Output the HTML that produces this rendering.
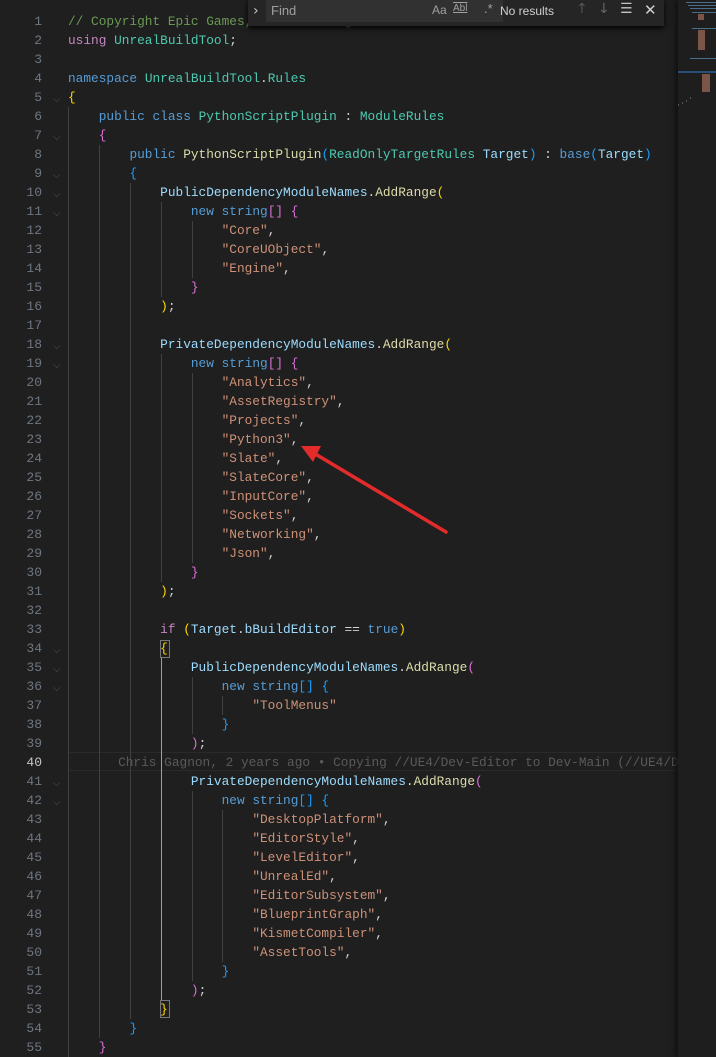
<!DOCTYPE html>
<html><head><meta charset="utf-8">
<style>
html,body{margin:0;padding:0;background:#1f1f1f;width:716px;height:1057px;overflow:hidden;}
#ed{position:absolute;left:0;top:0;width:678px;height:1057px;background:#1f1f1f;}
.ln{position:absolute;left:0;width:42px;text-align:right;font:13px "Liberation Mono",monospace;color:#6e7681;line-height:19px;top:12px;}
.ln div{height:19px}
pre{position:absolute;left:68px;top:12px;margin:0;font:12.8px/19px "Liberation Mono",monospace;color:#d4d4d4;}
.g{position:absolute;width:1px;background:#404040;}
.c{color:#6a9955}.k{color:#569cd6}.p{color:#c586c0}.t{color:#4ec9b0}.f{color:#dcdcaa}.s{color:#ce9178}.v{color:#9cdcfe}
.y{color:#ffd700}.o{color:#da70d6}.b{color:#179fff}
.bl{color:#5a5a5a;padding-left:4px}
#mm{position:absolute;left:678px;top:0;width:38px;height:1057px;background:#1e1e1e;box-shadow:-3px 0 5px #111;}
.fold{position:absolute;left:53px;color:#555;font:10px "DejaVu Sans",sans-serif;}
</style></head><body>
<div id="ed">
<div style="position:absolute;left:68px;top:752px;width:610px;height:17px;border-top:1px solid #2a2a2a;border-bottom:1px solid #2a2a2a;"></div>
<div class="g" style="left:68px;top:107px;height:950px"></div>
<div class="g" style="left:99px;top:145px;height:893px"></div>
<div class="g" style="left:130px;top:183px;height:836px"></div>
<div class="g" style="left:161px;top:202px;height:95px"></div>
<div class="g" style="left:161px;top:354px;height:228px"></div>
<div class="g" style="left:161px;top:658px;height:342px;background:#c9a800"></div>
<div class="g" style="left:192px;top:221px;height:57px"></div>
<div class="g" style="left:192px;top:373px;height:190px"></div>
<div class="g" style="left:192px;top:677px;height:57px"></div>
<div class="g" style="left:192px;top:791px;height:190px"></div>
<div class="g" style="left:222px;top:696px;height:19px"></div>
<div class="g" style="left:222px;top:810px;height:152px"></div>
<div style="position:absolute;left:160px;top:640px;width:8px;height:16px;border:1px solid #777"></div>
<div style="position:absolute;left:160px;top:1000px;width:8px;height:16px;border:1px solid #777"></div>
<div class="ln">
<div>1</div><div>2</div><div>3</div><div>4</div><div>5</div><div>6</div><div>7</div><div>8</div><div>9</div><div>10</div><div>11</div><div>12</div><div>13</div><div>14</div><div>15</div><div>16</div><div>17</div><div>18</div><div>19</div><div>20</div><div>21</div><div>22</div><div>23</div><div>24</div><div>25</div><div>26</div><div>27</div><div>28</div><div>29</div><div>30</div><div>31</div><div>32</div><div>33</div><div>34</div><div>35</div><div>36</div><div>37</div><div>38</div><div>39</div><div style="color:#c6c6c6">40</div><div>41</div><div>42</div><div>43</div><div>44</div><div>45</div><div>46</div><div>47</div><div>48</div><div>49</div><div>50</div><div>51</div><div>52</div><div>53</div><div>54</div><div>55</div>
</div>
<div class="fold" style="top:94px">⌵</div><div class="fold" style="top:132px">⌵</div><div class="fold" style="top:170px">⌵</div>
<div class="fold" style="top:189px">⌵</div><div class="fold" style="top:208px">⌵</div><div class="fold" style="top:341px">⌵</div><div class="fold" style="top:360px">⌵</div>
<div class="fold" style="top:645px">⌵</div><div class="fold" style="top:664px">⌵</div><div class="fold" style="top:683px">⌵</div><div class="fold" style="top:778px">⌵</div><div class="fold" style="top:797px">⌵</div>
<pre><span class="c">// Copyright Epic Games, Inc. All Rights Reserved.</span>
<span class="p">using</span> <span class="t">UnrealBuildTool</span>;

<span class="k">namespace</span> <span class="t">UnrealBuildTool</span>.<span class="t">Rules</span>
<span class="y">{</span>
    <span class="k">public</span> <span class="k">class</span> <span class="t">PythonScriptPlugin</span> : <span class="t">ModuleRules</span>
    <span class="o">{</span>
        <span class="k">public</span> <span class="f">PythonScriptPlugin</span><span class="b">(</span><span class="t">ReadOnlyTargetRules</span> <span class="v">Target</span><span class="b">)</span> : <span class="k">base</span><span class="b">(</span><span class="v">Target</span><span class="b">)</span>
        <span class="b">{</span>
            <span class="v">PublicDependencyModuleNames</span>.<span class="f">AddRange</span><span class="y">(</span>
                <span class="k">new</span> <span class="k">string</span><span class="o">[]</span> <span class="o">{</span>
                    <span class="s">"Core"</span>,
                    <span class="s">"CoreUObject"</span>,
                    <span class="s">"Engine"</span>,
                <span class="o">}</span>
            <span class="y">)</span>;

            <span class="v">PrivateDependencyModuleNames</span>.<span class="f">AddRange</span><span class="y">(</span>
                <span class="k">new</span> <span class="k">string</span><span class="o">[]</span> <span class="o">{</span>
                    <span class="s">"Analytics"</span>,
                    <span class="s">"AssetRegistry"</span>,
                    <span class="s">"Projects"</span>,
                    <span class="s">"Python3"</span>,
                    <span class="s">"Slate"</span>,
                    <span class="s">"SlateCore"</span>,
                    <span class="s">"InputCore"</span>,
                    <span class="s">"Sockets"</span>,
                    <span class="s">"Networking"</span>,
                    <span class="s">"Json"</span>,
                <span class="o">}</span>
            <span class="y">)</span>;

            <span class="p">if</span> <span class="y">(</span><span class="v">Target</span>.<span class="v">bBuildEditor</span> == <span class="k">true</span><span class="y">)</span>
            <span class="y">{</span>
                <span class="v">PublicDependencyModuleNames</span>.<span class="f">AddRange</span><span class="o">(</span>
                    <span class="k">new</span> <span class="k">string</span><span class="b">[]</span> <span class="b">{</span>
                        <span class="s">"ToolMenus"</span>
                    <span class="b">}</span>
                <span class="o">)</span>;
      <span class="bl">Chris Gagnon, 2 years ago • Copying //UE4/Dev-Editor to Dev-Main (//UE4/D</span>
                <span class="v">PrivateDependencyModuleNames</span>.<span class="f">AddRange</span><span class="o">(</span>
                    <span class="k">new</span> <span class="k">string</span><span class="b">[]</span> <span class="b">{</span>
                        <span class="s">"DesktopPlatform"</span>,
                        <span class="s">"EditorStyle"</span>,
                        <span class="s">"LevelEditor"</span>,
                        <span class="s">"UnrealEd"</span>,
                        <span class="s">"EditorSubsystem"</span>,
                        <span class="s">"BlueprintGraph"</span>,
                        <span class="s">"KismetCompiler"</span>,
                        <span class="s">"AssetTools"</span>,
                    <span class="b">}</span>
                <span class="o">)</span>;
            <span class="y">}</span>
        <span class="b">}</span>
    <span class="o">}</span>
</pre>
<div style="position:absolute;left:248px;top:0;width:416px;height:26px;background:#252526;box-shadow:0 2px 6px #000;">
  <div style="position:absolute;left:5px;top:3px;color:#c5c5c5;font:14px 'DejaVu Sans',sans-serif;">›</div>
  <div style="position:absolute;left:18px;top:0;width:237px;height:22px;background:#313131;"></div>
  <div style="position:absolute;left:23px;top:3px;color:#a0a0a0;font:13px 'Liberation Sans',sans-serif;">Find</div>
  <div style="position:absolute;left:184px;top:3px;color:#a0a0a0;font:12px 'Liberation Sans',sans-serif;">Aa</div>
  <div style="position:absolute;left:205px;top:3px;color:#a0a0a0;font:10px 'Liberation Sans',sans-serif;text-decoration:underline overline;">Abl</div>
  <div style="position:absolute;left:236px;top:1px;color:#a0a0a0;font:13px 'Liberation Sans',sans-serif;">.*</div>
  <div style="position:absolute;left:252px;top:4px;color:#d0d0d0;font:12px 'Liberation Sans',sans-serif;">No results</div>
  <div style="position:absolute;left:328px;top:1px;color:#555;font:14px 'DejaVu Sans',sans-serif;">↑</div>
  <div style="position:absolute;left:350px;top:1px;color:#666;font:14px 'DejaVu Sans',sans-serif;">↓</div>
  <div style="position:absolute;left:372px;top:1px;color:#c5c5c5;font:14px 'DejaVu Sans',sans-serif;">☰</div>
  <div style="position:absolute;left:396px;top:1px;color:#d0d0d0;font:15px 'DejaVu Sans',sans-serif;">✕</div>
</div>
<svg style="position:absolute;left:0;top:0" width="678" height="1057">
  <line x1="446" y1="532" x2="312" y2="452" stroke="#e32b2b" stroke-width="3.5" stroke-linecap="round"/>
  <polygon points="301,446 321,446 313,462" fill="#e32b2b"/>
</svg>
</div>
<div id="mm">
<svg width="38" height="120">
<g fill="#4a6f8a"><rect x="8" y="2" width="30" height="1"/><rect x="10" y="5" width="28" height="1"/><rect x="12" y="8" width="26" height="1"/><rect x="14" y="12" width="24" height="1"/><rect x="14" y="28" width="24" height="1"/><rect x="12" y="58" width="26" height="1"/><rect x="10" y="71" width="28" height="1"/></g>
<g fill="#7a5548"><rect x="20" y="14" width="6" height="6"/><rect x="20" y="30" width="7" height="20"/><rect x="24" y="74" width="8" height="18"/></g>
<rect x="0" y="71" width="38" height="2" fill="#264f78"/>
<g fill="#555"><rect x="0" y="104" width="1" height="2"/><rect x="4" y="102" width="1" height="2"/><rect x="8" y="100" width="1" height="2"/><rect x="12" y="97" width="1" height="2"/></g>
</svg>
</div>
</body></html>
